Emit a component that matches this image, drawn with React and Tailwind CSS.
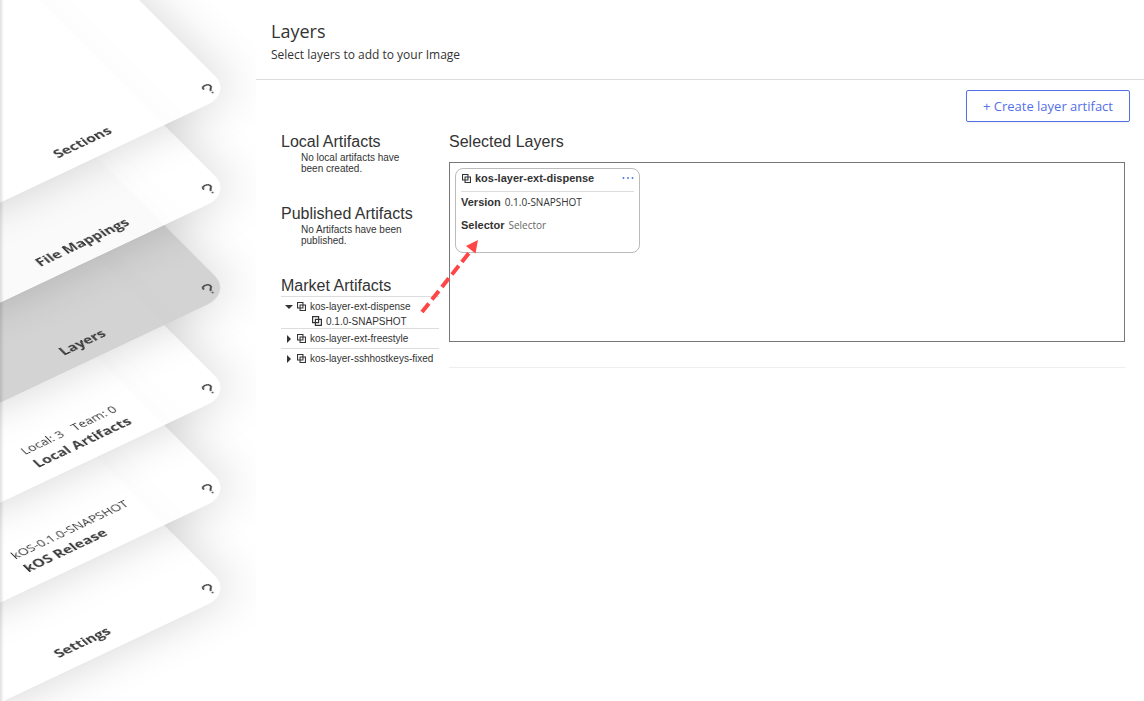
import clsx from "clsx";

const SECTIONS = [
  { title: "Sections" },
  { title: "File Mappings" },
  { title: "Layers", active: true },
  { title: "Local Artifacts", info: ["Local: 3", "Team: 0"] },
  { title: "kOS Release", info: ["kOS-0.1.0-SNAPSHOT"] },
  { title: "Settings" },
];

// first section sits on top of the pile
const DEPTH = ["z-60", "z-50", "z-40", "z-30", "z-20", "z-10"];

const MARKET = [
  { name: "kos-layer-ext-dispense", versions: ["0.1.0-SNAPSHOT"] },
  { name: "kos-layer-ext-freestyle" },
  { name: "kos-layer-sshhostkeys-fixed" },
];

function LayerIcon({ className }) {
  return (
    <svg viewBox="0 0 10 10" className={className} fill="none" stroke="currentColor" strokeWidth="1.2" aria-hidden="true">
      <path d="M0.6 0.6h6v6h-6z M3.4 3.4h6v6h-6z" />
    </svg>
  );
}

function Caret({ open }) {
  return (
    <svg viewBox="0 0 8 8" className="size-2 shrink-0" fill="currentColor" aria-hidden="true">
      <path d={open ? "M0 2h8L4 6z" : "M2 0l4 4-4 4z"} />
    </svg>
  );
}

// Sheets are laid flat with a 3D tilt, pinned at their bottom right corner.
function Sheet({ title, info, active }) {
  return (
    <div
      className={clsx(
        "absolute right-6 bottom-[7px] flex h-[400px] w-[328px] origin-bottom-right rotate-x-[46.5deg] -rotate-z-[34.5deg] flex-col items-center justify-end rounded-[30px] pb-3.5 text-base leading-6 text-[#3c3c3c] shadow-[0_0_60px_rgba(0,0,0,0.17)]",
        active ? "bg-[#cfcfcf]/92" : "bg-white/88"
      )}
    >
      <a href="#" className="block">
        {info && (
          <span className="flex gap-3 text-sm leading-5">
            {info.map((text) => <span key={text}>{text}</span>)}
          </span>
        )}
        <span className="block font-bold">{title}</span>
      </a>
      <button aria-label={`Help: ${title}`} className="absolute right-1.5 bottom-2 flex size-5 items-center justify-center">
        <svg viewBox="0 0 20 20" className="size-5" fill="none" stroke="currentColor" strokeWidth="1.8" aria-hidden="true">
          <path d="M5.6 8C5.4 5.2 7.2 3.6 9.8 3.6s4.4 1.4 4.4 3.8c0 2.8-3.8 3-3.8 6.4" />
          <path d="M10.4 15.4v2" />
        </svg>
      </button>
    </div>
  );
}

function SectionStack() {
  return (
    <nav className="relative min-h-screen w-64 shrink-0 overflow-hidden font-['Open_Sans',sans-serif]">
      <ul>
        {SECTIONS.map((s, i) => (
          <li key={s.title} className={clsx("relative h-[100px]", DEPTH[i])}>
            <Sheet {...s} />
          </li>
        ))}
      </ul>
      <div className="absolute inset-y-0 left-0 z-70 w-1 bg-linear-to-r from-black/12 to-transparent" />
    </nav>
  );
}

function ArtifactGroup({ title, children }) {
  return (
    <section className="min-h-[72px]">
      <h2 className="text-base leading-5">{title}</h2>
      {children}
    </section>
  );
}

function MarketTree() {
  return (
    <ul className="text-[10px] leading-[15px]">
      {MARKET.map(({ name, versions }) => (
        <li key={name} className="border-t border-[#ddd]">
          <button className="flex h-[19px] w-full items-center gap-1 pl-1 whitespace-nowrap">
            <Caret open={Boolean(versions)} />
            <LayerIcon className="size-[9px] shrink-0" />
            {name}
          </button>
          {versions?.map((v) => (
            <a key={v} href="#" className="-mt-0.5 flex h-3.5 items-center gap-1 pl-[31px]">
              <LayerIcon className="size-[10px] shrink-0" />
              {v}
            </a>
          ))}
        </li>
      ))}
    </ul>
  );
}

function LayerCard() {
  return (
    <article className="h-[85px] w-[185px] rounded-lg border border-[#bbb] px-[5px] text-[11px]">
      <header className="flex h-[23px] items-center gap-1 border-b border-[#ddd] pb-1 pl-px">
        <LayerIcon className="size-[9px] shrink-0" />
        <h3 className="font-bold">kos-layer-ext-dispense</h3>
        <button aria-label="More" className="ml-auto text-[#4a6cf0]">
          <svg viewBox="0 0 12 4" className="h-1 w-3" fill="currentColor" aria-hidden="true">
            <circle cx="1.5" cy="2" r="0.9" />
            <circle cx="6" cy="2" r="0.9" />
            <circle cx="10.5" cy="2" r="0.9" />
          </svg>
        </button>
      </header>
      <dl>
        <div className="flex h-5 items-center gap-1">
          <dt className="font-bold">Version</dt>
          <dd className="font-['Open_Sans',sans-serif] text-[10px]">0.1.0-SNAPSHOT</dd>
        </div>
        <div className="flex h-[26px] items-center gap-1">
          <dt className="font-bold">Selector</dt>
          <dd className="font-['Open_Sans',sans-serif] text-[10px] text-[#666]">Selector</dd>
        </div>
      </dl>
    </article>
  );
}

function DragArrow() {
  return (
    <svg viewBox="0 0 60 76" className="pointer-events-none absolute top-[76px] -left-[30px] h-[76px] w-[60px]" aria-hidden="true">
      <path d="M2 73L49 14" stroke="#ff4545" strokeWidth="4" strokeDasharray="11 5" fill="none" />
      <path d="M58 1L46 7l9.5 7.5z" fill="#ff4545" />
    </svg>
  );
}

export default function App() {
  return (
    <div className="flex min-h-screen bg-white font-['Liberation_Sans',Arial,sans-serif] text-[#333]">
      <SectionStack />
      <main className="min-w-0 flex-1">
        <header className="h-20 border-b border-[#ddd] px-[15px] pt-[18px] font-['Open_Sans',sans-serif]">
          <h1 className="text-lg leading-[26px]">Layers</h1>
          <p className="text-xs leading-[22px]">Select layers to add to your Image</p>
        </header>
        <div className="flex justify-end pt-2.5 pr-3.5">
          <button className="h-8 rounded-xs border border-[#5470e8] px-4 pt-px font-['Open_Sans',sans-serif] text-[13px] text-[#5470e8] shadow-xs">
            + Create layer artifact
          </button>
        </div>
        <div className="flex gap-2.5 pt-2.5 pr-[19px] pl-[25px]">
          <div className="w-[158px] shrink-0">
            <ArtifactGroup title="Local Artifacts">
              <p className="px-5 text-[10px] leading-[11px]">No local artifacts have been created.</p>
            </ArtifactGroup>
            <ArtifactGroup title="Published Artifacts">
              <p className="px-5 text-[10px] leading-[11px]">No Artifacts have been published.</p>
            </ArtifactGroup>
            <ArtifactGroup title="Market Artifacts">
              <MarketTree />
            </ArtifactGroup>
          </div>
          <section className="min-w-0 flex-1 border-b border-[#eee]">
            <h2 className="text-base leading-5">Selected Layers</h2>
            <div className="relative mt-2.5 mb-[25px] h-[180px] border border-[#777] p-[5px]">
              <LayerCard />
              <DragArrow />
            </div>
          </section>
        </div>
      </main>
    </div>
  );
}
